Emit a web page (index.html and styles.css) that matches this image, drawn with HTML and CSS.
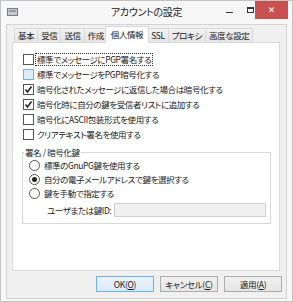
FILE: index.html
```html
<!DOCTYPE html>
<html lang="ja">
<head>
    <meta charset="UTF-8">
    <title>アカウントの設定</title>
    <link rel="stylesheet" href="styles.css">
</head>
<body>
    <div class="window">
        <div class="titlebar">
            <div class="tb-left">
                <svg class="app-icon" width="11" height="10" viewBox="0 0 11 10">
                    <rect x="0.5" y="1.5" width="10" height="7" fill="#c9c9d2" stroke="#7a7a88"/>
                    <rect x="2" y="3" width="7" height="2" fill="#9a9aa8"/>
                </svg>
            </div>
            <div class="title">アカウントの設定</div>
            <div class="controls">
                <span class="min"></span>
                <span class="max"></span>
                <span class="close">&#x2715;</span>
            </div>
        </div>
        <div class="client">
            <div class="tabs">
                <div class="tab">基本</div>
                <div class="tab">受信</div>
                <div class="tab">送信</div>
                <div class="tab">作成</div>
                <div class="tab active">個人情報</div>
                <div class="tab">SSL</div>
                <div class="tab">プロキシ</div>
                <div class="tab">高度な設定</div>
            </div>
            <div class="panel">
                <div class="row"><span class="box"></span><span class="label focus">標準でメッセージにPGP署名する</span></div>
                <div class="row"><span class="box hover"></span><span class="label">標準でメッセージをPGP暗号化する</span></div>
                <div class="row"><span class="box checked"><svg width="9" height="9" viewBox="0 0 9 9"><path d="M1.5 4.5 L3.5 7 L7.5 1.5" fill="none" stroke="#222" stroke-width="1.6"/></svg></span><span class="label">暗号化されたメッセージに返信した場合は暗号化する</span></div>
                <div class="row"><span class="box checked"><svg width="9" height="9" viewBox="0 0 9 9"><path d="M1.5 4.5 L3.5 7 L7.5 1.5" fill="none" stroke="#222" stroke-width="1.6"/></svg></span><span class="label">暗号化時に自分の鍵を受信者リストに追加する</span></div>
                <div class="row"><span class="box"></span><span class="label">暗号化にASCII包装形式を使用する</span></div>
                <div class="row"><span class="box"></span><span class="label">クリアテキスト署名を使用する</span></div>

                <fieldset class="group">
                    <legend>署名 / 暗号化鍵</legend>
                    <div class="row radio-row"><span class="radio"></span><span class="label">標準のGnuPG鍵を使用する</span></div>
                    <div class="row radio-row"><span class="radio selected"></span><span class="label">自分の電子メールアドレスで鍵を選択する</span></div>
                    <div class="row radio-row"><span class="radio"></span><span class="label">鍵を手動で指定する</span></div>
                    <div class="key-row">
                        <span class="key-label">ユーザまたは鍵ID:</span>
                        <span class="input"></span>
                    </div>
                </fieldset>
            </div>
            <div class="buttons">
                <button class="btn default">OK(<u>O</u>)</button>
                <button class="btn">キャンセル(<u>C</u>)</button>
                <button class="btn">適用(<u>A</u>)</button>
            </div>
        </div>
    </div>
</body>
</html>
```

FILE: styles.css
```css
body {
    margin: 0;
    font-family: "Noto Sans CJK JP", "Noto Sans", sans-serif;
    font-size: 8.5px;
    letter-spacing: -0.4px;
    font-feature-settings: "palt";
    color: #1a1a1a;
}

.window {
    width: 293px;
    height: 302px;
    box-sizing: border-box;
    border: 1px solid #c4c4c4;
    background: #f7f7f7;
    display: flex;
    flex-direction: column;
}

.titlebar {
    height: 23px;
    display: grid;
    grid-template-columns: 1fr auto 1fr;
}

.app-icon {
    display: block;
    margin: 6px 0 0 6px;
}

.title {
    font-size: 10px;
    letter-spacing: -0.3px;
    line-height: 22px;
    color: #222;
}

.controls {
    display: flex;
    justify-content: flex-end;
    align-items: flex-start;
    margin-right: 4px;
}

.min {
    width: 7px;
    height: 1px;
    background: #333;
    margin: 11px 14px 0 0;
}

.max {
    width: 7px;
    height: 6px;
    border: 1px solid #333;
    border-top-width: 2px;
    box-sizing: border-box;
    margin: 6px 1px 0 0;
}

.close {
    width: 33px;
    height: 18px;
    background: #c75050;
    color: #fff;
    font-size: 9px;
    font-weight: bold;
    line-height: 18px;
    text-align: center;
    letter-spacing: 0;
    font-family: "DejaVu Sans", sans-serif;
}

.client {
    flex: 1;
    margin: 0 5px 2px;
    border: 1px solid #d3d3d3;
    background: #f0f0f0;
    padding: 1px 4px 6px 5px;
    display: flex;
    flex-direction: column;
}

.tabs {
    height: 16px;
    display: flex;
    align-items: flex-end;
    padding-left: 2px;
}

.tab {
    height: 14px;
    box-sizing: border-box;
    line-height: 13px;
    padding: 0 3px;
    border: 1px solid #d9d9d9;
    border-bottom: none;
    background: linear-gradient(#f2f2f2, #e5e5e5);
    margin-right: -1px;
}

.tab.active {
    height: 17px;
    line-height: 15px;
    padding: 0 5px;
    background: #fff;
    margin: 0 -2px -1px -2px;
    position: relative;
    z-index: 1;
}

.panel {
    height: 229px;
    box-sizing: border-box;
    border: 1px solid #d9d9d9;
    background: #fff;
    margin-right: 2px;
    padding: 9px 8px 0 10px;
}

.row {
    height: 15px;
    display: flex;
    align-items: center;
}

.box {
    width: 11px;
    height: 11px;
    box-sizing: border-box;
    border: 1px solid #555;
    background: #fff;
    margin-right: 1px;
    display: flex;
    align-items: center;
    justify-content: center;
}

.box.hover {
    border-color: #6fb0e6;
    background: #dcecfb;
}

.label {
    padding: 0 1px;
    border: 1px dotted transparent;
    line-height: 11px;
    white-space: nowrap;
}

.label.focus {
    border-color: #333;
}

.group {
    margin: 4px 0 0 -1px;
    border: 1px solid #d9d9d9;
    padding: 0 4px 5px 6px;
}

.group legend {
    padding: 0 1px;
    margin-left: -5px;
    line-height: 12px;
}

.radio-row {
    height: 14px;
}

.radio {
    width: 11px;
    height: 11px;
    box-sizing: border-box;
    border: 1px solid #555;
    border-radius: 50%;
    margin-right: 2px;
    display: flex;
    align-items: center;
    justify-content: center;
}

.radio.selected::after {
    content: "";
    width: 5px;
    height: 5px;
    border-radius: 50%;
    background: #222;
}

.key-row {
    display: flex;
    align-items: center;
    height: 16px;
    margin-top: 2px;
}

.key-label {
    width: 67px;
    margin-left: 18px;
    white-space: nowrap;
}

.input {
    flex: 1;
    height: 14px;
    box-sizing: border-box;
    border: 1px solid #d0d0d0;
    background: #f0f0f0;
}

.buttons {
    display: flex;
    justify-content: flex-end;
    gap: 6px;
    margin-top: 5px;
}

.btn {
    width: 58px;
    height: 16px;
    padding: 0;
    font-family: inherit;
    font-size: 8.5px;
    letter-spacing: -0.3px;
    font-feature-settings: "palt";
    border: 1px solid #adadad;
    background: linear-gradient(#f0f0f0, #e5e5e5);
    color: #1a1a1a;
}

.btn.default {
    border-color: #6fb0e6;
    background: linear-gradient(#eaf3fc, #dcebfb);
}
```
